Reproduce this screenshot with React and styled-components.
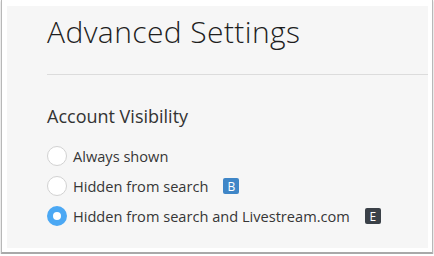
import React, { useState } from 'react';
import styled, { createGlobalStyle } from 'styled-components';

const Global = createGlobalStyle`
  html, body {
    margin: 0;
    padding: 0;
    background: #ffffff;
  }
  body {
    font-family: 'Open Sans', 'Liberation Sans', sans-serif;
  }
`;

const Frame = styled.div`
  box-sizing: border-box;
  margin-left: 1px;
  width: 432px;
  height: 254px;
  padding: 6px 4px 4px 5px;
  background: #ffffff;
  border-left: 1px solid #b8b8b8;
  border-right: 1px solid #b8b8b8;
  border-bottom: 2px solid #a9a9a9;
  box-shadow: 0 1px 2px rgba(0, 0, 0, 0.25);
`;

const Panel = styled.div`
  box-sizing: border-box;
  height: 100%;
  background: #f6f6f6;
  padding: 8px 0 0 40px;
`;

const Title = styled.h1`
  margin: 0;
  font-weight: 300;
  font-size: 30px;
  line-height: 36px;
  color: #1e1e1e;
  letter-spacing: 0.4px;
`;

const Divider = styled.hr`
  margin: 24px 0 0;
  border: 0;
  border-top: 1px solid #dcdcdc;
`;

const Section = styled.h2`
  margin: 29px 0 0;
  font-weight: 400;
  font-size: 18px;
  line-height: 24px;
  color: #333333;
`;

const List = styled.div`
  display: flex;
  flex-direction: column;
  gap: 10px;
  margin-top: 18px;
`;

const Row = styled.label`
  display: flex;
  align-items: center;
  height: 20px;
  font-size: 14.6px;
  color: #363636;
  cursor: pointer;
`;

const Radio = styled.span`
  box-sizing: border-box;
  flex: none;
  width: 20px;
  height: 20px;
  margin-right: 6px;
  border-radius: 50%;
  background: #ffffff;
  border: ${(p) => (p.checked ? '6.5px solid #4ba8f4' : '1px solid #d2d2d2')};
`;

const Badge = styled.span`
  display: inline-flex;
  align-items: center;
  justify-content: center;
  width: 16px;
  height: 16px;
  margin-left: 15px;
  border-radius: 2px;
  font-size: 12px;
  font-weight: 400;
  color: #ffffff;
  background: ${(p) => (p.dark ? '#3b4148' : '#3f86c7')};
`;

const options = [
  { label: 'Always shown' },
  { label: 'Hidden from search', badge: 'B' },
  { label: 'Hidden from search and Livestream.com', badge: 'E', dark: true },
];

export default function App() {
  const [selected, setSelected] = useState(2);
  return (
    <>
      <Global />
      <Frame>
        <Panel>
          <Title>Advanced Settings</Title>
          <Divider />
          <Section>Account Visibility</Section>
          <List>
            {options.map((o, i) => (
              <Row key={o.label} onClick={() => setSelected(i)}>
                <Radio checked={selected === i} />
                {o.label}
                {o.badge && <Badge dark={o.dark}>{o.badge}</Badge>}
              </Row>
            ))}
          </List>
        </Panel>
      </Frame>
    </>
  );
}
